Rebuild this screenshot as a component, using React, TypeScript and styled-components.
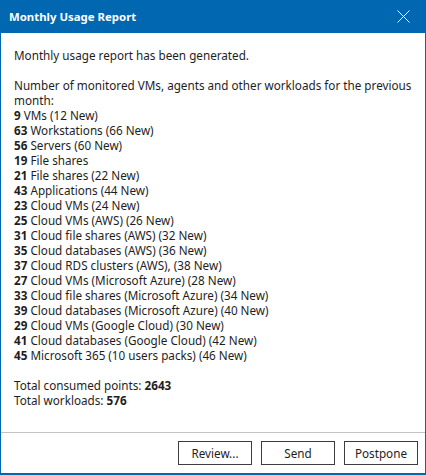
import React from "react";
import styled, { createGlobalStyle } from "styled-components";

const Global = createGlobalStyle`
  html, body { margin: 0; padding: 0; background: #ffffff; }
  body { font-family: "Segoe UI", "Noto Sans", "Liberation Sans", sans-serif; }
`;

const Window = styled.div`
  width: 426px;
  height: 475px;
  box-sizing: border-box;
  border: 1px solid #0067b0;
  border-bottom-width: 2px;
  display: flex;
  flex-direction: column;
  background: #ffffff;
`;

const TitleBar = styled.div`
  height: 33px;
  background: #0067b0;
  display: flex;
  align-items: center;
  justify-content: space-between;
  padding: 0 0 0 9px;
  margin: -1px -1px 0 -1px;
  flex-shrink: 0;
`;

const Title = styled.div`
  color: #ffffff;
  font-size: 11.4px;
  font-weight: 700;
`;

const CloseButton = styled.button`
  width: 46px;
  height: 33px;
  border: none;
  background: transparent;
  display: flex;
  align-items: center;
  justify-content: center;
  padding: 0;
  cursor: pointer;
`;

const Body = styled.div`
  flex: 1;
  padding: 15px 13px 0 13px;
  color: #1e1e1e;
  font-size: 11.7px;
  line-height: 15px;
`;

const Line = styled.div<{ $gapBefore?: boolean }>`
  margin-top: ${(p) => (p.$gapBefore ? "15px" : "0")};
  white-space: nowrap;
  height: 15px;
`;

const Num = styled.b`
  font-weight: 700;
`;

const Footer = styled.div`
  border-top: 1px solid #c3c3c3;
  height: 40px;
  display: flex;
  align-items: center;
  justify-content: flex-end;
  gap: 9px;
  padding: 0 7px 0 0;
  flex-shrink: 0;
`;

const Button = styled.button`
  width: 74px;
  height: 24px;
  box-sizing: border-box;
  border: 1px solid #3c3c3c;
  background: #ffffff;
  color: #1e1e1e;
  font-family: inherit;
  font-size: 11.7px;
  padding: 0;
`;

const items: [string, string][] = [
  ["9", "VMs (12 New)"],
  ["63", "Workstations (66 New)"],
  ["56", "Servers (60 New)"],
  ["19", "File shares"],
  ["21", "File shares (22 New)"],
  ["43", "Applications (44 New)"],
  ["23", "Cloud VMs (24 New)"],
  ["25", "Cloud VMs (AWS) (26 New)"],
  ["31", "Cloud file shares (AWS) (32 New)"],
  ["35", "Cloud databases (AWS) (36 New)"],
  ["37", "Cloud RDS clusters (AWS), (38 New)"],
  ["27", "Cloud VMs (Microsoft Azure) (28 New)"],
  ["33", "Cloud file shares (Microsoft Azure) (34 New)"],
  ["39", "Cloud databases (Microsoft Azure) (40 New)"],
  ["29", "Cloud VMs (Google Cloud) (30 New)"],
  ["41", "Cloud databases (Google Cloud) (42 New)"],
  ["45", "Microsoft 365 (10 users packs) (46 New)"],
];

export default function App() {
  return (
    <>
      <Global />
      <Window>
        <TitleBar>
          <Title>Monthly Usage Report</Title>
          <CloseButton aria-label="Close">
            <svg width="13" height="13" viewBox="0 0 13 13">
              <path d="M0.5 0.5 L12.5 12.5 M12.5 0.5 L0.5 12.5" stroke="#ffffff" strokeWidth="1" />
            </svg>
          </CloseButton>
        </TitleBar>
        <Body>
          <Line>Monthly usage report has been generated.</Line>
          <Line $gapBefore>Number of monitored VMs, agents and other workloads for the previous</Line>
          <Line>month:</Line>
          {items.map(([n, t], i) => (
            <Line key={i}>
              <Num>{n}</Num> {t}
            </Line>
          ))}
          <Line $gapBefore>
            Total consumed points: <Num>2643</Num>
          </Line>
          <Line>
            Total workloads: <Num>576</Num>
          </Line>
        </Body>
        <Footer>
          <Button>Review...</Button>
          <Button>Send</Button>
          <Button>Postpone</Button>
        </Footer>
      </Window>
    </>
  );
}
